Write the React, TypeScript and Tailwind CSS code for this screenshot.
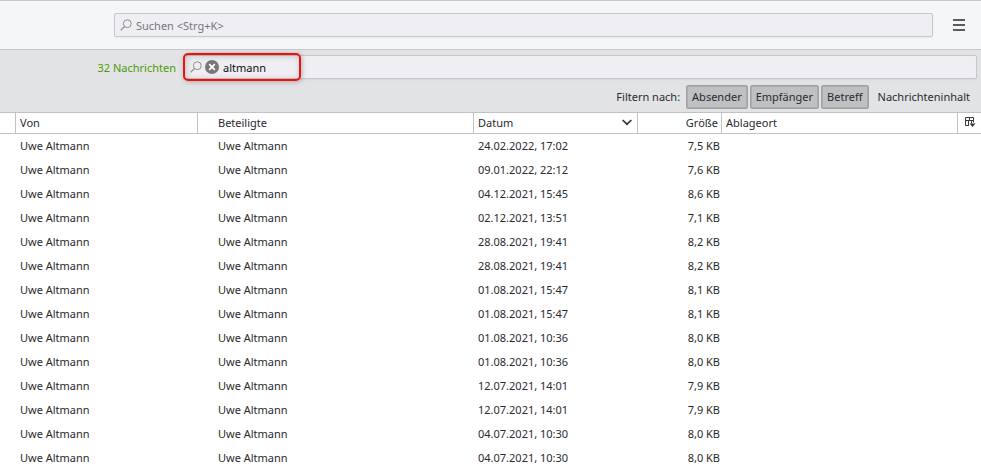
import { useState } from "react";

const messages = [
  ["24.02.2022, 17:02", "7,5 KB"],
  ["09.01.2022, 22:12", "7,6 KB"],
  ["04.12.2021, 15:45", "8,6 KB"],
  ["02.12.2021, 13:51", "7,1 KB"],
  ["28.08.2021, 19:41", "8,2 KB"],
  ["28.08.2021, 19:41", "8,2 KB"],
  ["01.08.2021, 15:47", "8,1 KB"],
  ["01.08.2021, 15:47", "8,1 KB"],
  ["01.08.2021, 10:36", "8,0 KB"],
  ["01.08.2021, 10:36", "8,0 KB"],
  ["12.07.2021, 14:01", "7,9 KB"],
  ["12.07.2021, 14:01", "7,9 KB"],
  ["04.07.2021, 10:30", "8,0 KB"],
  ["04.07.2021, 10:30", "8,0 KB"],
];

const filters = ["Absender", "Empfänger", "Betreff", "Nachrichteninhalt"];

function SearchIcon() {
  return (
    <svg className="h-3 w-3 shrink-0" viewBox="0 0 12 12" fill="none" stroke="#8c8c90" aria-hidden="true">
      <circle cx="7.3" cy="4.7" r="3.9" />
      <path d="M4.5 7.5 0.7 11.3" strokeWidth="1.2" />
    </svg>
  );
}

function Toolbar() {
  return (
    <header className="flex h-[50px] items-center border-y border-[#c8c8ca] bg-[#f5f6f8] pr-4 pl-[114px]">
      <label className="flex h-6 flex-1 items-center gap-1 rounded-xs border border-[#c8c8ca] bg-[#eeeef3] pl-[5px] shadow-xs">
        <SearchIcon />
        <input
          type="search"
          aria-label="Suchen"
          placeholder="Suchen <Strg+K>"
          className="min-w-0 flex-1 bg-transparent pt-px outline-none placeholder:text-[#77777a]"
        />
      </label>
      <button type="button" aria-label="Menü" className="ml-5 flex h-6 w-3 items-center">
        <svg className="h-3 w-3" viewBox="0 0 12 12" fill="#5a5a62" aria-hidden="true">
          <path d="M0 0h12v2H0zM0 5h12v2H0zM0 10h12v2H0z" />
        </svg>
      </button>
    </header>
  );
}

function QuickFilter() {
  const [query, setQuery] = useState("altmann");
  const [active, setActive] = useState(["Absender", "Empfänger", "Betreff"]);
  const toggle = (name: string) =>
    setActive(active.includes(name) ? active.filter((n) => n !== name) : [...active, name]);

  return (
    <section className="bg-[#e2e3e5] pt-[5px] pr-1 pb-[3px]">
      <div className="flex items-center">
        <span className="w-44 shrink-0 pt-px text-right text-[#4e9a06]">32 Nachrichten</span>
        <div className="relative ml-2 flex h-6 flex-1 items-center rounded-xs border border-[#c8c8ca] bg-[#eeeef3] pl-[5px] shadow-xs">
          <SearchIcon />
          <button type="button" aria-label="Suche löschen" onClick={() => setQuery("")} className="ml-[3px]">
            <svg className="h-3.5 w-3.5" viewBox="0 0 14 14" aria-hidden="true">
              <circle cx="7" cy="7" r="7" fill="#78787a" />
              <path d="m4.2 4.2 5.6 5.6m0-5.6L4.2 9.8" stroke="#fff" strokeWidth="1.8" />
            </svg>
          </button>
          <input
            type="text"
            aria-label="Nachrichten filtern"
            value={query}
            onChange={(e) => setQuery(e.target.value)}
            className="ml-1 min-w-0 flex-1 bg-transparent pt-px text-[#0c0c0d] outline-none"
          />
          <div className="pointer-events-none absolute -top-[3px] -left-0.5 h-7 w-[118px] rounded-[5px] border-2 border-[#f01010] shadow-[1px_1px_5px_rgba(0,0,0,0.25),inset_1px_1px_6px_rgba(0,0,0,0.2)]" />
        </div>
      </div>
      <div className="mt-1.5 flex items-center justify-end gap-0.5">
        <span className="mr-1">Filtern nach:</span>
        {filters.map((name) => (
          <button
            key={name}
            type="button"
            aria-pressed={active.includes(name)}
            onClick={() => toggle(name)}
            className={
              active.includes(name)
                ? "h-6 rounded-xs border border-[#a0a1a3] bg-[#bfc0c2] px-[5px] shadow-[inset_0_0_0_1px_#acadaf]"
                : "h-6 rounded-xs border border-transparent px-1.5"
            }
          >
            {name}
          </button>
        ))}
      </div>
    </section>
  );
}

const headCell = "h-[22px] border-y border-r border-[#c2c2c4] p-0 text-left font-normal";

function MessageTable() {
  return (
    <table className="w-full table-fixed border-separate border-spacing-0">
      <colgroup>
        <col className="w-4" />
        <col className="w-[182px]" />
        <col className="w-[276px]" />
        <col className="w-[164px]" />
        <col className="w-[84px]" />
        <col />
        <col className="w-[23px]" />
      </colgroup>
      <thead>
        <tr>
          <td className={headCell} />
          <th scope="col" className={headCell}>
            <span className="pl-1">Von</span>
          </th>
          <th scope="col" className={headCell}>
            <span className="pl-5">Beteiligte</span>
          </th>
          <th scope="col" aria-sort="descending" className={headCell}>
            <span className="flex items-center justify-between pr-[5px] pl-1">
              Datum
              <svg className="h-2.5 w-2.5" viewBox="0 0 10 10" fill="none" stroke="#38383d" strokeWidth="1.7" aria-hidden="true">
                <path d="m0.6 2 4.4 4.2L9.400 2" />
              </svg>
            </span>
          </th>
          <th scope="col" className={headCell}>
            <span className="block pr-[3px] text-right">Größe</span>
          </th>
          <th scope="col" className={headCell}>
            <span className="pl-1">Ablageort</span>
          </th>
          <td className="border-y border-[#c2c2c4] p-0">
            <button type="button" aria-label="Spalten auswählen" className="flex w-full justify-center">
              <svg className="h-3 w-3" viewBox="0 0 12 12" fill="none" stroke="#38383d" aria-hidden="true">
                <path d="M5 8.5H1.5v-8h8v5M1.5 3.5h8M5.5 0.5v3M4.500 3.500v5M7.500 3.500v3" />
                <path d="M5.500 6.500h6L8.500 10z" fill="#38383d" stroke="none" />
              </svg>
            </button>
          </td>
        </tr>
      </thead>
      <tbody>
        {messages.map(([date, size], i) => (
          <tr key={i}>
            <td className="h-6 p-0" />
            <td className="p-0 pl-1">Uwe Altmann</td>
            <td className="p-0 pl-5">Uwe Altmann</td>
            <td className="p-0 pl-1">{date}</td>
            <td className="p-0 pr-0.5 text-right">{size}</td>
            <td className="p-0" />
            <td className="p-0" />
          </tr>
        ))}
      </tbody>
    </table>
  );
}

export default function App() {
  return (
    <main className="min-h-screen bg-white font-['Noto_Sans','Open_Sans',sans-serif] text-[11px] leading-5 text-[#2a2a2e]">
      <Toolbar />
      <QuickFilter />
      <MessageTable />
    </main>
  );
}
